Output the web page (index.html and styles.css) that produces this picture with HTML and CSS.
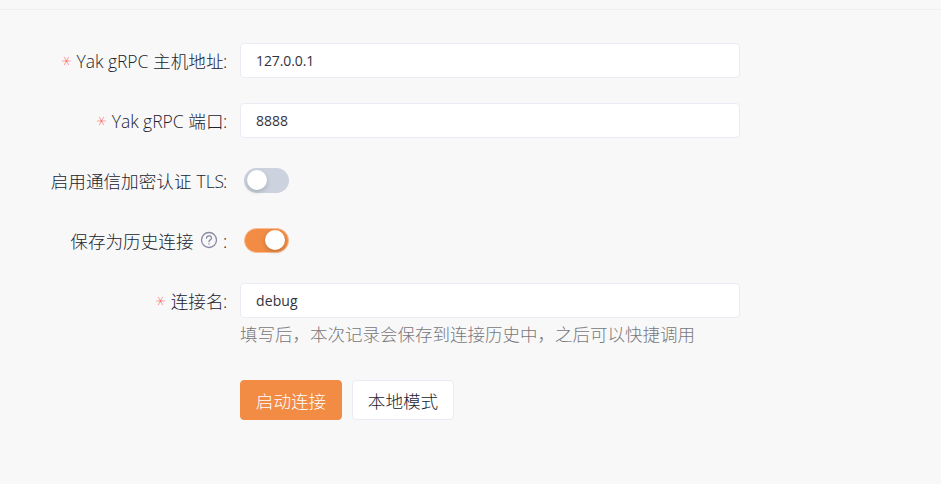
FILE: index.html
```
<!DOCTYPE html>
<html lang="zh-CN">
<head>
<meta charset="utf-8">
<title>Yak gRPC</title>
<link rel="stylesheet" href="styles.css">
</head>
<body>
<header class="topbar"></header>
<form class="form">
  <div class="row">
    <label class="label"><span class="star">*</span><span class="latin">Yak gRPC</span><span>主机地址</span><span class="colon">:</span></label>
    <div class="input ip">127.0.0.1</div>
  </div>
  <div class="row">
    <label class="label"><span class="star">*</span><span class="latin">Yak gRPC</span><span>端口</span><span class="colon">:</span></label>
    <div class="input port">8888</div>
  </div>
  <div class="row">
    <label class="label"><span>启用通信加密认证</span><span class="latin tls">TLS</span><span class="colon">:</span></label>
    <div class="switch"><span class="knob"></span></div>
  </div>
  <div class="row">
    <label class="label"><span>保存为历史连接</span><svg class="help" viewBox="0 0 18 18" fill="none" stroke="#8b8ba5" stroke-width="1.3" stroke-linecap="round"><circle cx="9" cy="9" r="7.5"/><path d="M6.5 7.2C6.5 4 11.5 4 11.5 7C11.5 9 9 8.8 9 10.7"/><path d="M9 12.9v.1" stroke-width="1.5"/></svg><span class="colon">:</span></label>
    <div class="switch on"><span class="knob"></span></div>
  </div>
  <div class="row">
    <label class="label"><span class="star">*</span><span>连接名</span><span class="colon">:</span></label>
    <div class="input name">debug</div>
  </div>
  <p class="hint">填写后，本次记录会保存到连接历史中，之后可以快捷调用</p>
  <div class="actions">
    <button type="button" class="btn primary">启动连接</button>
    <button type="button" class="btn">本地模式</button>
  </div>
</form>
</body>
</html>
```
FILE: styles.css
```
* { box-sizing: border-box; }
body {
  margin: 0;
  height: 484px;
  overflow: hidden;
  background: #f8f8f8;
  color: #20232f;
  font: 300 17.6px/28px "Noto Sans CJK SC", sans-serif;
}
.topbar { height: 10px; border-bottom: 1px solid #eeeeee; }
.form { padding-top: 33px; }
.row { display: flex; align-items: center; height: 35px; margin-bottom: 25px; }
.label {
  display: flex;
  justify-content: flex-end;
  align-items: center;
  flex: none;
  width: 228px;
  height: 35px;
  margin-right: 12px;
  white-space: nowrap;
}
.latin {
  width: 72px;
  margin-right: 4.5px;
  font-family: "Open Sans", sans-serif;
  font-size: 17.5px;
  letter-spacing: -0.05px;
}
.tls { width: 27px; margin: 0 0 0 5px; }
.colon { width: 4.5px; margin-left: -0.5px; margin-right: 0.5px; font-family: "Open Sans", sans-serif; }
.star {
  display: flex;
  justify-content: center;
  width: 9px;
  height: 20px;
  margin: 0 5px 0 0;
  color: #ff4d4f;
  font: 200 20px/26px "DejaVu Sans", sans-serif;
  transform: translateX(-0.5px) rotate(90deg);
}
.help { width: 18px; height: 18px; margin: -2px 6px 0 6px; }
.input {
  width: 500px;
  height: 35px;
  padding-left: 15px;
  border: 1px solid #eaecf3;
  border-radius: 4px;
  background: #fff;
  color: #31343f;
  font: 400 14px/33px "Open Sans", sans-serif;
}
.ip { letter-spacing: -0.1px; }
.name { letter-spacing: 0.1px; }
.switch {
  display: flex;
  align-items: center;
  width: 45px;
  height: 25px;
  margin-left: 4px;
  padding: 0 3px;
  border-radius: 13px;
  background: #ccd2de;
}
.switch.on { justify-content: flex-end; background: #f28b44; border: 1px solid #f8bd94; }
.knob { width: 20px; height: 20px; margin-top: -1px; border-radius: 50%; background: #fff; box-shadow: 0 2px 4px rgba(0, 35, 11, .2); }
.hint { margin: -23px 0 0 240px; height: 28px; color: #77777b; font-size: 17.5px; }
.actions { display: flex; gap: 10px; margin: 32px 0 0 240px; }
.btn {
  width: 102px;
  height: 40px;
  padding: 1px 0 0;
  border: 1px solid #eaecf3;
  border-radius: 4px;
  background: #fff;
  color: #20232f;
  font: 300 17.6px/28px "Noto Sans CJK SC", sans-serif;
}
.primary { background: #f28b44; border-color: #f28b44; color: #fff; }
```
